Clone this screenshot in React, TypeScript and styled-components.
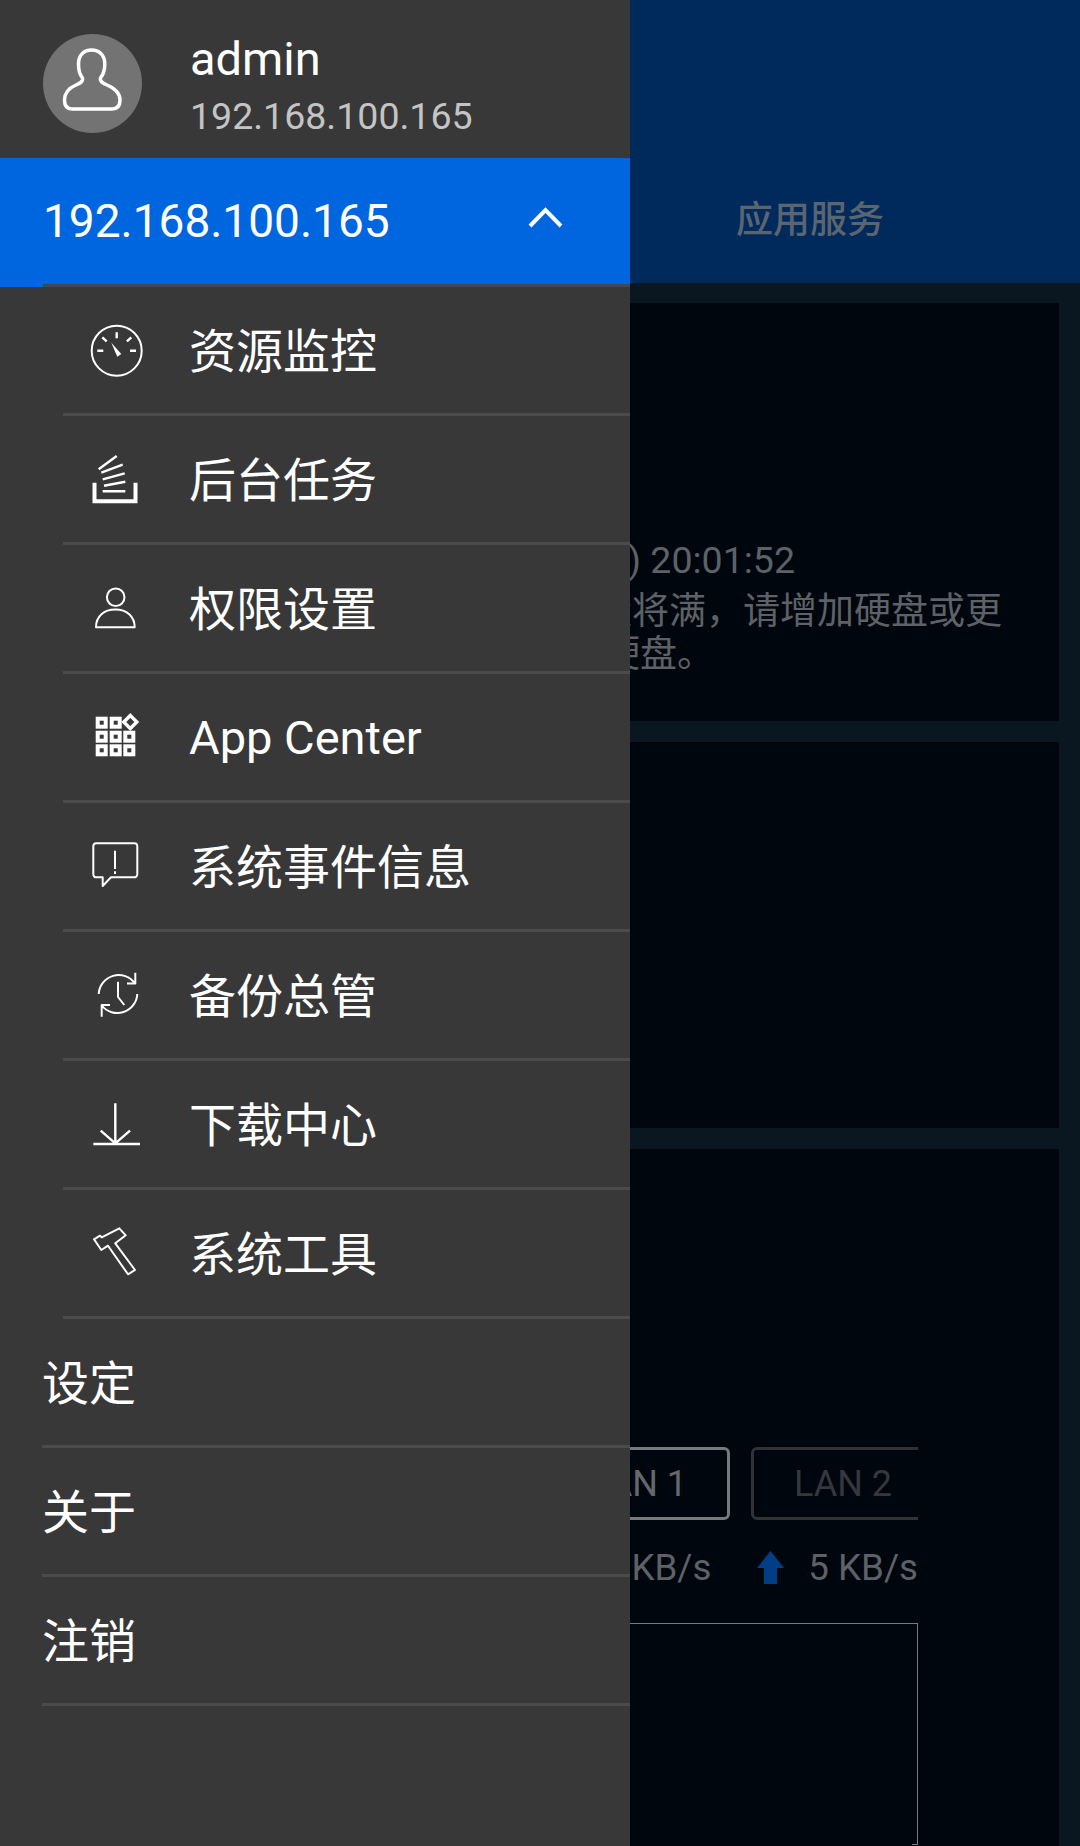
import React from "react"
import styled, { createGlobalStyle } from "styled-components"

const fontStack = `Roboto, "Noto Sans CJK SC", sans-serif`

const GlobalStyle = createGlobalStyle`
  html, body {
    margin: 0;
    padding: 0;
    background: #0a1620;
    font-family: ${fontStack};
  }
  * {
    box-sizing: border-box;
  }
`

const Screen = styled.div`
  position: relative;
  width: 1080px;
  height: 1846px;
  overflow: hidden;
  background: #0a1620;
`

const TopBar = styled.div`
  display: flex;
  justify-content: flex-end;
  align-items: flex-end;
  height: 283px;
  background: #002a5c;
`

const Tab = styled.div`
  display: flex;
  align-items: center;
  justify-content: center;
  width: 540px;
  height: 126px;
  padding-bottom: 7px;
  color: #5b6570;
  font-size: 37px;
  font-weight: 500;
`

const Cards = styled.div`
  display: flex;
  flex-direction: column;
  gap: 21px;
  padding: 20px 21px 0;
`

const Card = styled.div<{ $height: number }>`
  height: ${({ $height }) => $height}px;
  background: #00060e;
`

const Notice = styled(Card)`
  padding-top: 236px;
  color: #5e6165;
  font-size: 37px;
  line-height: 43px;
  white-space: nowrap;
`

const NoticeTime = styled.div`
  padding-left: 607px;
  margin-bottom: 8px;
  font-size: 37.5px;
`

const NoticeLine = styled.div<{ $indent: number }>`
  padding-left: ${({ $indent }) => $indent}px;
`

const NetCard = styled(Card)`
  display: flex;
  flex-direction: column;
  align-items: flex-end;
  padding: 298px 141px 0 0;
`

const LanTabs = styled.div`
  display: flex;
  gap: 21px;
  width: 372px;
  height: 73px;
  overflow: hidden;
`

const LanTab = styled.div<{ $active?: boolean }>`
  flex: 0 0 184px;
  display: flex;
  align-items: center;
  justify-content: center;
  border: 3px solid ${({ $active }) => ($active ? "#77797e" : "#303236")};
  border-radius: 6px;
  color: ${({ $active }) => ($active ? "#65686c" : "#35373b")};
  font-size: 36px;
`

const Speed = styled.div`
  display: flex;
  align-items: center;
  height: 95px;
  margin-bottom: 8px;
  color: #5e6165;
  font-size: 36.7px;
  white-space: nowrap;
`

const UpArrow = styled.svg`
  margin: 0 24px 0 46px;
`

const Chart = styled.div`
  position: relative;
  width: 372px;
  height: 222px;
  border-top: 1px solid #77797e;
  border-right: 1px solid #77797e;

  &::after {
    content: "";
    position: absolute;
    right: 0;
    bottom: 0;
    width: 5px;
    height: 1px;
    background: #77797e;
  }
`

const Drawer = styled.nav`
  position: absolute;
  top: 0;
  left: 0;
  bottom: 0;
  width: 630px;
  background: #383838;
  color: #fff;
`

const Profile = styled.div`
  display: flex;
  align-items: flex-start;
  height: 158px;
  padding: 34px 0 0 43px;
`

const Avatar = styled.div`
  width: 99px;
  height: 99px;
  border-radius: 50%;
  background: #737373;
  margin-right: 48px;
`

const ProfileText = styled.div`
  display: flex;
  flex-direction: column;
  margin-top: -2px;
`

const UserName = styled.div`
  font-size: 47px;
  line-height: 54px;
`

const UserIp = styled.div`
  margin-top: 5px;
  font-size: 37.5px;
  line-height: 50px;
  color: #c4c4c4;
`

const DeviceRow = styled.div`
  height: 129px;
  padding-left: 43px;
  background: #0066e0;
`

const DeviceInner = styled.div`
  display: flex;
  align-items: center;
  justify-content: space-between;
  height: 100%;
  padding-right: 64px;
  border-bottom: 3px solid #3f4854;
  font-size: 46px;
`

const Chevron = styled.svg`
  margin-bottom: 6px;
`

const Row = styled.div<{ $inset: number }>`
  height: 129px;
  padding-left: ${({ $inset }) => $inset}px;
`

const RowInner = styled.div`
  display: flex;
  align-items: center;
  height: 100%;
  border-bottom: 3px solid #4b4b4b;
`

const IconSlot = styled.div`
  flex: 0 0 126px;
  display: flex;
  justify-content: center;
  padding-right: 20px;
`

const Label = styled.div<{ $latin?: boolean }>`
  font-size: 47px;
  margin-bottom: ${({ $latin }) => ($latin ? 0 : 6)}px;
`

const Icon: React.FC<{ children: React.ReactNode; dy?: number }> = ({ children, dy = 0 }) => (
  <svg
    width="64"
    height="64"
    viewBox={`0 ${-dy} 64 64`}
    fill="none"
    stroke="#fff"
    strokeWidth="2"
    strokeLinejoin="round"
  >
    {children}
  </svg>
)

const GaugeIcon = () => (
  <Icon>
    <circle cx="32.7" cy="32.7" r="25" />
    <path
      strokeWidth="2.4"
      d="M13.3 32.7h6M46 32.7h6M32.7 14.3v6M18.3 19.3l4.4 4M47.3 19.3l-4.4 4"
    />
    <path fill="#fff" stroke="none" d="M27.3 24.7L37.3 36l-4 2.7z" />
  </Icon>
)

const TasksIcon = () => (
  <Icon>
    <path strokeWidth="4" d="M10.500 35.700v18.500h41v-18.500" strokeLinejoin="miter" />
    <path
      strokeWidth="2.4"
      d="M18.7 44.300h22.600M20 38.700l21.300-4M18.700 32.300l22-6M17.300 25.700l21.400-8M14.700 22.300L32.700 9"
    />
  </Icon>
)

const UserIcon = () => (
  <Icon>
    <circle cx="31.7" cy="21.3" r="8.8" />
    <path d="M12 51.3C12 40 20 33.5 31.3 33.5S50.7 40 50.7 51.3z" />
  </Icon>
)

const gridCells = [
  [11.7, 24.7],
  [25.7, 24.7],
  [39.3, 24.7],
  [11.7, 38.3],
  [25.7, 38.3],
  [39.3, 38.3],
  [11.7, 10.7],
  [25.7, 10.7],
]

const AppsIcon = () => (
  <Icon dy={1}>
    {gridCells.map(([x, y]) => (
      <rect
        key={`${x}-${y}`}
        x={x + 2}
        y={y + 2}
        width="8"
        height="8"
        strokeWidth="4"
        strokeLinejoin="miter"
      />
    ))}
    <path strokeWidth="3.4" strokeLinejoin="miter" d="M46.3 9.5l6.5 6.5-6.5 6.5-6.5-6.5z" />
  </Icon>
)

const EventIcon = () => (
  <Icon dy={1}>
    <path d="M12.3 8.3h38a3 3 0 0 1 3 3v28a3 3 0 0 1-3 3H27L18.7 51v-8.7h-6.4a3 3 0 0 1-3-3v-28a3 3 0 0 1 3-3z" />
    <path d="M31 15.7V34M31 36.3v2.7" />
  </Icon>
)

const BackupIcon = () => (
  <Icon dy={1}>
    <path d="M14.7 30A20 20 0 0 1 51 19.5M51.3 8.7v10.8H43" />
    <path d="M53.3 30A20 20 0 0 1 17.7 41.5M17.7 52.7V41H26" />
    <path d="M34 17.7V33l6.3 8" />
  </Icon>
)

const DownloadIcon = () => (
  <Icon dy={1}>
    <path strokeWidth="2.4" d="M31.3 10.3v40M9.3 51H56M16.7 37.7l14.6 12.6L46 37.7" />
  </Icon>
)

const ToolsIcon = () => (
  <Icon dy={1}>
    <path
      strokeWidth="2"
      d="M10 17.3l6-3.6 1.7 1.6 17.6-9 6.4 7-10.4 8L51 48l-7 4.3-20-28.6-6.7 4.3z"
    />
  </Icon>
)

const subItems = [
  { label: "资源监控", icon: <GaugeIcon /> },
  { label: "后台任务", icon: <TasksIcon /> },
  { label: "权限设置", icon: <UserIcon /> },
  { label: "App Center", icon: <AppsIcon />, latin: true },
  { label: "系统事件信息", icon: <EventIcon /> },
  { label: "备份总管", icon: <BackupIcon /> },
  { label: "下载中心", icon: <DownloadIcon /> },
  { label: "系统工具", icon: <ToolsIcon /> },
]

const mainItems = ["设定", "关于", "注销"]

export default function App() {
  return (
    <Screen>
      <GlobalStyle />
      <TopBar>
        <Tab>应用服务</Tab>
      </TopBar>
      <Cards>
        <Notice $height={418}>
          <NoticeTime>) 20:01:52</NoticeTime>
          <NoticeLine $indent={574}>量将满，请增加硬盘或更</NoticeLine>
          <NoticeLine $indent={582}>硬盘。</NoticeLine>
        </Notice>
        <Card $height={386} />
        <NetCard $height={697}>
          <LanTabs>
            <LanTab $active>LAN 1</LanTab>
            <LanTab>LAN 2</LanTab>
          </LanTabs>
          <Speed>
            KB/s
            <UpArrow width="27" height="33" viewBox="0 0 27 33">
              <path fill="#003f85" d="M13.5 0L27 17h-7v16H7V17H0z" />
            </UpArrow>
            5 KB/s
          </Speed>
          <Chart />
        </NetCard>
      </Cards>
      <Drawer>
        <Profile>
          <Avatar>
            <svg width="99" height="99" viewBox="0 0 99 99" fill="none" stroke="#fff" strokeWidth="3.5">
              <path d="M48.6 16C41 16 35.5 21 35.5 30c0 7 1.5 11 4 14 1 3-1.5 5-6.5 7C26 54 21.5 59 21.5 66c0 6 2.5 9 7.5 9h40c5 0 8-3 8-9 0-7-6-12-13-15-5-2-7.5-4-6.5-7 2.5-3 4.3-7 4.3-14C61.8 21 56 16 48.6 16z" />
            </svg>
          </Avatar>
          <ProfileText>
            <UserName>admin</UserName>
            <UserIp>192.168.100.165</UserIp>
          </ProfileText>
        </Profile>
        <DeviceRow>
          <DeviceInner>
            192.168.100.165
            <Chevron width="40" height="24" viewBox="0 0 40 24" fill="none" stroke="#fff" strokeWidth="4">
              <path d="M4 20L19.5 4 35 20" />
            </Chevron>
          </DeviceInner>
        </DeviceRow>
        {subItems.map((item) => (
          <Row key={item.label} $inset={63}>
            <RowInner>
              <IconSlot>{item.icon}</IconSlot>
              <Label $latin={item.latin}>{item.label}</Label>
            </RowInner>
          </Row>
        ))}
        {mainItems.map((label) => (
          <Row key={label} $inset={42}>
            <RowInner>
              <Label>{label}</Label>
            </RowInner>
          </Row>
        ))}
      </Drawer>
    </Screen>
  )
}
